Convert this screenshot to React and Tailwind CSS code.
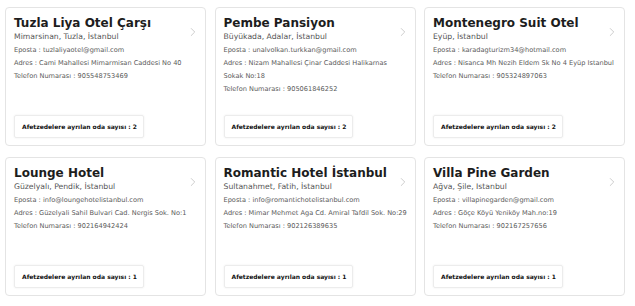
import { ChevronRight } from 'lucide-react';

const hotels = [
  {
    name: 'Tuzla Liya Otel Çarşı',
    place: 'Mimarsinan, Tuzla, İstanbul',
    email: 'tuzlaliyaotel@gmail.com',
    address: ['Cami Mahallesi Mimarmisan Caddesi No 40'],
    phone: '905548753469',
    rooms: 2,
  },
  {
    name: 'Pembe Pansiyon',
    place: 'Büyükada, Adalar, İstanbul',
    email: 'unalvolkan.turkkan@gmail.com',
    address: ['Nizam Mahallesi Çinar Caddesi Halikarnas', 'Sokak No:18'],
    phone: '905061846252',
    rooms: 2,
  },
  {
    name: 'Montenegro Suit Otel',
    place: 'Eyüp, İstanbul',
    email: 'karadagturizm34@hotmail.com',
    address: ['Nisanca Mh Nezih Eldem Sk No 4 Eyüp Istanbul'],
    phone: '905324897063',
    rooms: 2,
  },
  {
    name: 'Lounge Hotel',
    place: 'Güzelyalı, Pendik, İstanbul',
    email: 'info@loungehotelistanbul.com',
    address: ['Güzelyali Sahil Bulvari Cad. Nergis Sok. No:1'],
    phone: '902164942424',
    rooms: 1,
  },
  {
    name: 'Romantic Hotel İstanbul',
    place: 'Sultanahmet, Fatih, İstanbul',
    email: 'info@romantichotelistanbul.com',
    address: ['Mimar Mehmet Aga Cd. Amiral Tafdil Sok. No:29'],
    phone: '902126389635',
    rooms: 1,
  },
  {
    name: 'Villa Pine Garden',
    place: 'Ağva, Şile, Istanbul',
    email: 'villapinegarden@gmail.com',
    address: ['Göçe Köyü Yeniköy Mah.no:19'],
    phone: '902167257656',
    rooms: 1,
  },
];

export default function App() {
  return (
    <div className="w-[635px] h-[306px] bg-white pl-[5px] pt-[7px] font-['DejaVu_Sans',sans-serif]">
      <div className="grid grid-cols-[201px_201px_201px] gap-x-[8.5px] gap-y-[11px]">
        {hotels.map(h => (
          <div key={h.name} className="h-[139px] border border-[#e4e4e4] rounded-[4px] flex flex-col pl-[8px] pr-[5px] pt-[8px] pb-[7px] relative">
            <ChevronRight className="absolute right-[5px] top-[17px] w-[14px] h-[14px] text-[#c2c2c2]" strokeWidth={1.4} />
            <h3 className="text-[12px] font-bold text-[#1d1d1d] leading-[14px]">{h.name}</h3>
            <p className="text-[7.7px] text-[#555] leading-[11px] mt-[1px]">{h.place}</p>
            <div className="text-[6.6px] text-[#5a5a5a] leading-[13px] mt-[2px]">
              <p>Eposta : {h.email}</p>
              {h.address.map((line, i) => (
                <p key={i} className="whitespace-nowrap">{i === 0 ? `Adres : ${line}` : line}</p>
              ))}
              <p>Telefon Numarası : {h.phone}</p>
            </div>
            <div className="mt-auto self-start border border-[#ececec] rounded-[2px] shadow-[0_0_2px_rgba(0,0,0,0.08)] pl-[7px] pr-[6px] h-[23px] flex items-center text-[6px] font-bold text-[#111]">
              Afetzedelere ayrılan oda sayısı : {h.rooms}
            </div>
          </div>
        ))}
      </div>
    </div>
  );
}
